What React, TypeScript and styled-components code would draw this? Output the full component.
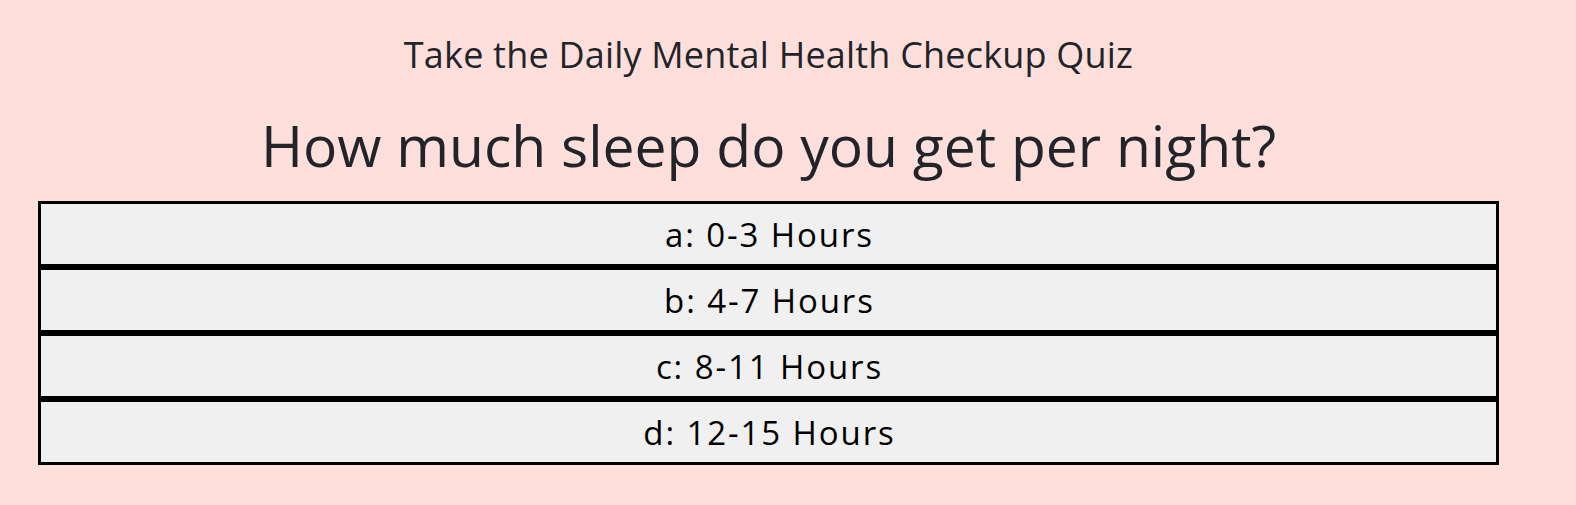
import styled, { createGlobalStyle } from 'styled-components';

const GlobalStyle = createGlobalStyle`
  html, body {
    margin: 0;
    padding: 0;
    background: #ffdfdb;
  }
  body {
    font-family: "Open Sans", Lato, sans-serif;
    color: #212529;
  }
`;

const answers = ['a: 0-3 Hours', 'b: 4-7 Hours', 'c: 8-11 Hours', 'd: 12-15 Hours'];

function App() {
  return (
    <>
      <GlobalStyle />
      <Main>
        <Title>Take the Daily Mental Health Checkup Quiz</Title>
        <Question>How much sleep do you get per night?</Question>
        <Answers>
          {answers.map((a) => (
            <AnswerButton key={a}>{a}</AnswerButton>
          ))}
        </Answers>
      </Main>
    </>
  );
}

export default App;

const Main = styled.main`
  width: 1537px;
  min-height: 505px;
  display: flex;
  flex-direction: column;
  align-items: center;
`;

const Title = styled.h2`
  margin: 33px 0 0;
  font-size: 36px;
  line-height: 44px;
  font-weight: 400;
  letter-spacing: 0.2px;
`;

const Question = styled.h1`
  margin: 35px 0 0;
  font-size: 57px;
  line-height: 66px;
  font-weight: 400;
`;

const Answers = styled.div`
  margin-top: 23px;
  width: 1461px;
  display: flex;
  flex-direction: column;
`;

const AnswerButton = styled.button`
  height: 66px;
  margin: 0;
  padding: 0 0 0 2px;
  border: 3px solid #000;
  background: #f0f0f0;
  color: #000;
  font-family: "Open Sans", Lato, sans-serif;
  font-size: 33px;
  letter-spacing: 1.9px;
  cursor: pointer;
`;
